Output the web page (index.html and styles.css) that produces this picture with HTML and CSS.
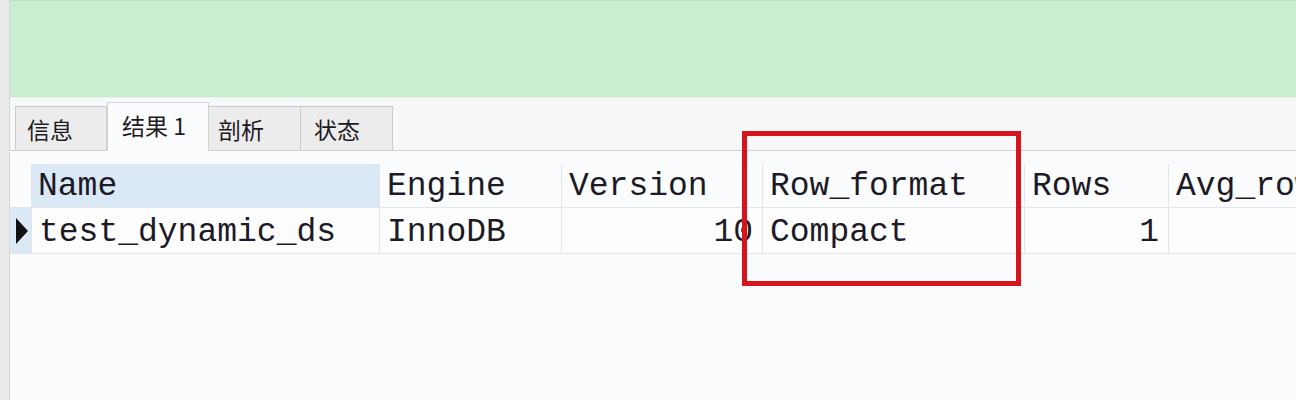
FILE: index.html
```html
<!DOCTYPE html>
<html lang="zh-CN">
<head>
<meta charset="UTF-8">
<title>test_dynamic_ds</title>
    <link rel="stylesheet" href="styles.css">
</head>
<body>
    <div class="side"></div>
    <div class="main">
        <!-- query editor area -->
        <div class="editor"></div>

        <!-- result tabs -->
        <div class="tabs">
            <div class="tab tab-info">信息</div>
            <div class="tab tab-result active">结果 1</div>
            <div class="tab tab-profile">剖析</div>
            <div class="tab tab-status">状态</div>
        </div>

        <!-- result grid -->
        <div class="grid-wrap">
            <div class="grid">
                <div class="cell head marker-head"></div>
                <div class="cell head selected">Name</div>
                <div class="cell head">Engine</div>
                <div class="cell head">Version</div>
                <div class="cell head">Row_format</div>
                <div class="cell head">Rows</div>
                <div class="cell head">Avg_row_length</div>

                <div class="cell marker"><span class="arrow"></span></div>
                <div class="cell">test_dynamic_ds</div>
                <div class="cell">InnoDB</div>
                <div class="cell num">10</div>
                <div class="cell">Compact</div>
                <div class="cell num">1</div>
                <div class="cell num"></div>
            </div>
            <div class="highlight"></div>
        </div>
    </div>
</body>
</html>
```

FILE: styles.css
```css
body{
    margin: 0;
    display: flex;
    height: 400px;
    overflow: hidden;
    background-color: #fafbfd;
}
.side{
    width: 9px;
    flex-shrink: 0;
    background-color: #ebebeb;
    border-right: 1px solid #d6d6d6;
}
.main{
    flex: 1;
    min-width: 0;
    display: flex;
    flex-direction: column;
    overflow: hidden;
}
.editor{
    height: 96px;
    background-color: #c8eecf;
    border-top: 1px solid #b9e4c1;
}
.tabs{
    display: flex;
    align-items: flex-end;
    padding: 7px 0 0 5px;
    height: 45px;
    background-color: #f7f8f8;
    border-top: 1px solid #eef0ef;
    border-bottom: 1px solid #cfd2d4;
    font-family: "Noto Sans CJK SC", "Noto Sans", sans-serif;
    font-size: 23px;
    color: #1d1a24;
}
.tab{
    box-sizing: border-box;
    height: 44px;
    line-height: 44px;
    padding-left: 12px;
    background-color: #ececec;
    border: 1px solid #c9cbcd;
    border-bottom: none;
}
.tab-info{ width: 92px; padding-left: 11px; }
.tab-result{ width: 102px; padding-left: 14px; }
.tab-profile{ width: 92px; padding-left: 9px; border-left: none; }
.tab-status{ width: 92px; padding-left: 13px; border-left: none; }
.tab.active{
    height: 49px;
    line-height: 44px;
    margin-bottom: -1px;
    background-color: #fbfcfd;
    border-color: #d3d5d7;
}
.grid-wrap{
    position: relative;
    flex: 1;
    padding-top: 13px;
}
.grid{
    display: grid;
    grid-template-columns: 22px 348px 182px 201px 262px 144px 200px;
    grid-template-rows: 44px 46px;
    font-family: "Liberation Mono", "Courier New", monospace;
    font-size: 33px;
    color: #1c1a26;
}
.cell{
    box-sizing: border-box;
    padding: 3px 8px 0 7px;
    white-space: nowrap;
    overflow: hidden;
    line-height: 44px;
    background-color: #fdfdfe;
    border-right: 1px solid #e2e6eb;
    border-bottom: 1px solid #e2e6eb;
}
.head{
    padding-top: 1px;
    line-height: 44px;
    background-color: #fbfcfd;
}
.head.selected{
    background-color: #dbe8f6;
    padding-left: 6px;
}
.marker-head{
    background-color: #fafbfd;
}
.marker{
    padding: 0;
    background-color: #dbe8f6;
    display: flex;
    align-items: center;
    justify-content: center;
}
.arrow{
    width: 0;
    height: 0;
    border-top: 13px solid transparent;
    border-bottom: 13px solid transparent;
    border-left: 12px solid #111111;
    margin-left: 2px;
}
.num{
    text-align: right;
    padding-right: 9px;
}
.highlight{
    position: absolute;
    left: 732px;
    top: -20px;
    width: 279px;
    height: 155px;
    box-sizing: border-box;
    border: 5px solid #d7141e;
}
```
